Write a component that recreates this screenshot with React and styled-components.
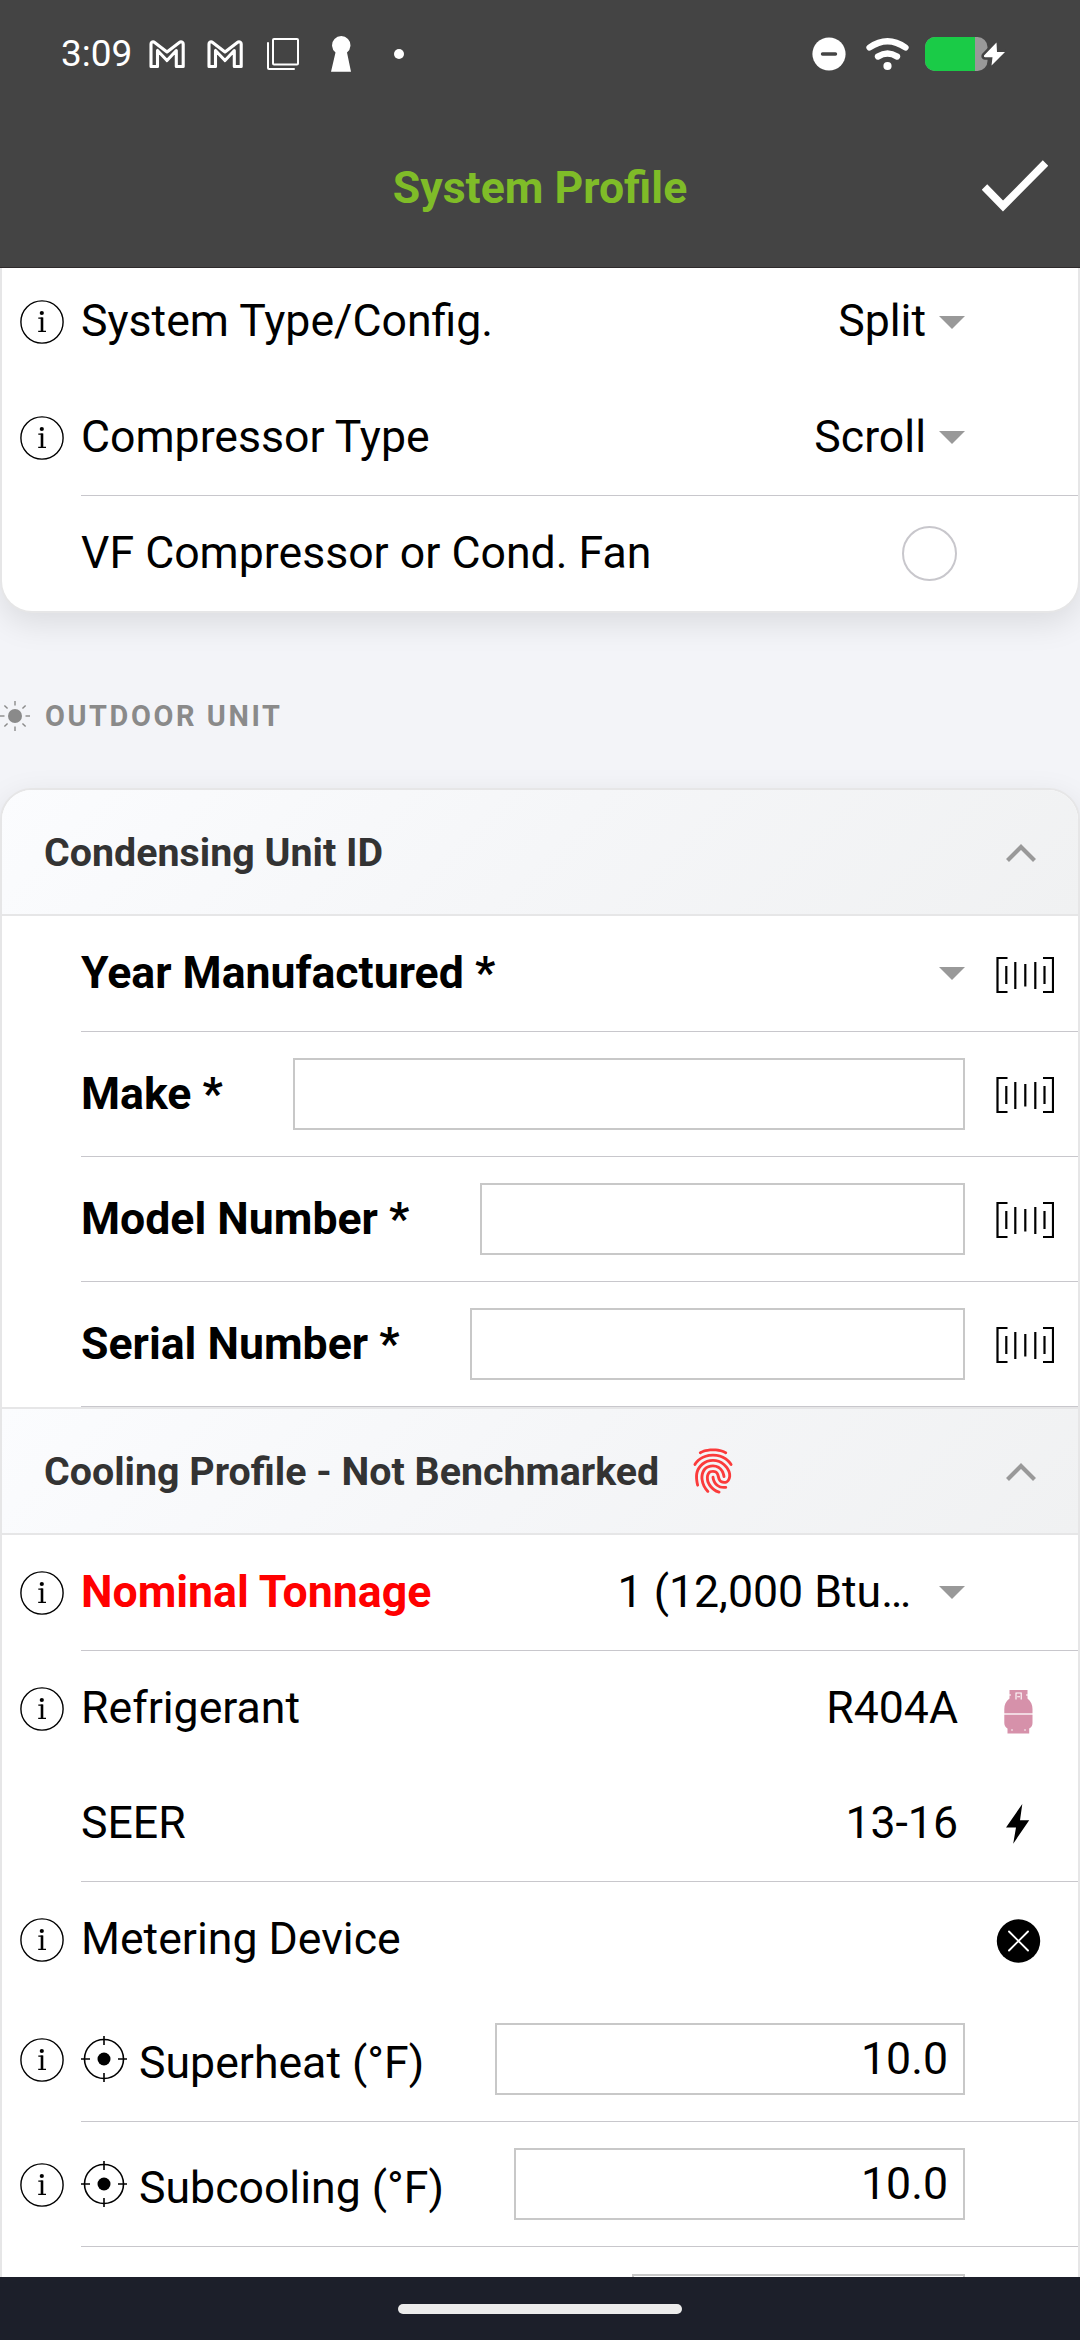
import React from "react";
import styled, { createGlobalStyle } from "styled-components";
import { IoFingerPrint } from "react-icons/io5";

const GlobalStyle = createGlobalStyle`
  * {
    box-sizing: border-box;
  }
  body {
    margin: 0;
    background: #f3f4f8;
    font-family: Roboto, "Liberation Sans", sans-serif;
  }
  svg {
    display: block;
    flex: none;
  }
`;

const Screen = styled.div`
  width: 1080px;
  height: 2340px;
  display: flex;
  flex-direction: column;
  overflow: hidden;
  color: #000;
  font-size: 44.625px;
`;

const Header = styled.header`
  height: 268px;
  flex: none;
  background: #444;
  border-bottom: 1px solid #2e2a2b;
`;

const StatusBar = styled.div`
  height: 108px;
  display: flex;
  align-items: center;
  justify-content: space-between;
  padding: 0 74px 0 61px;
`;

const StatusGroup = styled.div`
  display: flex;
  align-items: center;
`;

const Clock = styled.span`
  width: 88px;
  font-size: 37px;
  line-height: 40px;
  color: #fff;
`;

const Toolbar = styled.div`
  height: 159px;
  display: grid;
  grid-template-columns: 1fr auto 1fr;
  align-items: center;
  padding: 0 32px;
`;

const Title = styled.h1`
  grid-column: 2;
  margin: 0;
  font-size: 44.625px;
  font-weight: 700;
  line-height: 54px;
  color: #7fbc28;
`;

const DoneButton = styled.button`
  justify-self: end;
  padding: 0 0 3px;
  border: none;
  background: transparent;
`;

const Content = styled.main`
  flex: 1;
  min-height: 0;
  overflow: hidden;
`;

const Card = styled.section`
  border: 2px solid #e6e6e7;
  border-radius: 32px;
  background: #fff;
  box-shadow: 0 10px 32px rgba(0, 0, 0, 0.1);
  overflow: hidden;
`;

// the first card is scrolled partly under the header
const ScrolledCard = styled(Card)`
  margin-top: -4px;
  border-top: none;
  border-top-left-radius: 0;
  border-top-right-radius: 0;
`;

const SectionTitle = styled.h2`
  height: 175px;
  margin: 0;
  padding-top: 31px;
  display: flex;
  align-items: center;
  gap: 15px;
  font-size: 28.875px;
  font-weight: 700;
  letter-spacing: 2.6px;
  color: #8a8a8a;
`;

const GroupHeader = styled.div`
  height: ${(props) => (props.$divided ? 128 : 126)}px;
  display: flex;
  align-items: center;
  padding: 0 42px;
  border-top: ${(props) => (props.$divided ? "2px solid #e6e6e7" : "none")};
  border-bottom: 2px solid #e6e6e7;
  background: linear-gradient(135deg, #fbfcfe, #f5f6f8 50%, #f0f1f2);
  font-size: 39.375px;
  font-weight: 700;
  color: #333;
`;

const GroupName = styled.span`
  flex: 1;
  display: flex;
  align-items: center;
  gap: 30px;
  white-space: nowrap;
`;

const Row = styled.div`
  height: ${(props) => props.$height}px;
  display: flex;
`;

const InfoSlot = styled.div`
  width: 79px;
  flex: none;
  display: flex;
  align-items: center;
  padding-left: 18px;
`;

const RowBody = styled.div`
  flex: 1;
  min-width: 0;
  display: flex;
  align-items: center;
  justify-content: space-between;
  border-bottom: ${(props) => (props.$line ? "1px solid #c8c7cc" : "none")};
`;

const Label = styled.label`
  display: flex;
  align-items: center;
  gap: 12px;
  padding-bottom: ${(props) => (props.$raised ? 2 : 0)}px;
  white-space: nowrap;
  font-weight: ${(props) => (props.$strong ? 700 : 400)};
  color: ${(props) => props.$color || "#000"};
`;

const LabelText = styled.span`
  padding-top: ${(props) => (props.$lowered ? 8 : 0)}px;
`;

const Controls = styled.div`
  flex: none;
  display: flex;
  align-items: center;
`;

const Value = styled.span`
  padding: 0 7px 2px 0;
`;

const SelectValue = styled.span`
  padding: 0 ${(props) => props.$gap || 13}px 2px 0;
`;

const Caret = styled.span`
  border-left: 13px solid transparent;
  border-right: 13px solid transparent;
  border-top: 13px solid #999;
`;

const Field = styled.input`
  width: ${(props) => props.$width}px;
  height: 72px;
  padding: 0 15px;
  border: 2px solid #c8c8c8;
  border-radius: 0;
  background: #fff;
  color: #000;
  font: inherit;
  text-align: right;
  outline: none;
`;

const Radio = styled.span`
  width: 55px;
  height: 55px;
  margin-right: 8px;
  border: 2px solid #c8c7cc;
  border-radius: 50%;
`;

const Trailing = styled.div`
  width: 113px;
  height: 58px;
  display: flex;
  align-items: center;
  padding: 2px 0 0 31px;
`;

const NavBar = styled.footer`
  height: 63px;
  flex: none;
  display: flex;
  justify-content: center;
  padding-top: 27px;
  background: #1c1f2a;
`;

const NavPill = styled.div`
  width: 284px;
  height: 10px;
  border-radius: 5px;
  background: #ececec;
`;

const NotificationIcons = () => (
  <svg width="256" height="40" viewBox="149 35 256 40" fill="none">
    {[0, 58].map((x) => (
      <path
        key={x}
        transform={`translate(${x} 0)`}
        d="M151 67.500V45Q151 42.500 154 43L167 53L180 43Q183.200 42.500 183.200 45V67.500H176.300V51.500L167 61.500L157.500 51.500V67.500Z"
        stroke="#fff"
        strokeWidth="3.1"
        strokeLinejoin="round"
      />
    ))}
    <rect x="273" y="40" width="25" height="25.500" rx="1" stroke="#fff" strokeWidth="2" />
    <path d="M268 44V69Q268 70 269 70H294" stroke="#fff" strokeWidth="2" strokeLinecap="round" />
    <path d="M335.500 53.500A9.200 9.200 0 1 1 347 53.500L351 72.700H331Z" fill="#fff" />
    <circle cx="399" cy="55" r="5" fill="#fff" />
  </svg>
);

const SystemIcons = () => (
  <svg width="194" height="40" viewBox="812 34 194 40" fill="none">
    <circle cx="829" cy="54" r="16.600" fill="#fff" />
    <path d="M822.500 54H835.500" stroke="#444" strokeWidth="3.400" strokeLinecap="round" />
    <path
      d="M869.500 47.500Q887.500 35 905.500 47.500M878 56.500Q887.500 50.500 897 56.500"
      stroke="#fff"
      strokeWidth="6.300"
      strokeLinecap="round"
    />
    <circle cx="887.500" cy="66" r="4.100" fill="#fff" />
    <rect x="925" y="37" width="62.500" height="34" rx="10" fill="#999" />
    <path d="M975 37V71H935A10 10 0 0 1 925 61V47A10 10 0 0 1 935 37Z" fill="#1acb47" />
    <path
      d="M996.500 42.500L984 55.500Q983.500 57 985 57.200H992.500L991.500 65.500L1005 52H997Z"
      fill="#fff"
      stroke="#444"
      strokeWidth="5"
      strokeLinejoin="round"
      paintOrder="stroke"
    />
  </svg>
);

const CheckIcon = () => (
  <svg width="66" height="52" viewBox="0 0 66 52" fill="none">
    <path d="M2.500 27L21 46L63.500 3" stroke="#fff" strokeWidth="7.600" />
  </svg>
);

const InfoIcon = () => (
  <svg width="44" height="44" viewBox="-22 -22 44 44" fill="none" stroke="#000">
    <circle r="21.100" strokeWidth="1.400" />
    <circle cx="-0.200" cy="-9" r="2.100" fill="#000" stroke="none" />
    <path d="M-3.700 -3.900H0V9.300M-3.800 9.300H4" strokeWidth="1.300" />
    <path d="M0 -4.500V9.300" strokeWidth="2.600" />
  </svg>
);

const SunIcon = () => (
  <svg width="30" height="30" viewBox="-15 -15 30 30">
    <circle r="7" fill="#8a8a8a" />
    {[0, 45, 90, 135, 180, 225, 270, 315].map((angle) => (
      <path
        key={angle}
        d="M0 -10.500V-15"
        transform={`rotate(${angle})`}
        stroke="#8a8a8a"
        strokeWidth="1.400"
      />
    ))}
  </svg>
);

const ChevronUp = () => (
  <svg width="30" height="20" viewBox="0 -2 30 20" fill="none">
    <path d="M1.500 16.500L15 3L28.500 16.500" stroke="#999" strokeWidth="4.200" />
  </svg>
);

const BarcodeIcon = () => (
  <svg width="58" height="38" viewBox="0 0 58 38" fill="none" stroke="#000">
    <path d="M11.500 2H1.500V36H11.500M47 2H57V36H47" strokeWidth="2.200" />
    <path
      d="M10.300 10V28M19.300 6V33M29.300 8V30.500M39.300 6V33M48.500 10V28"
      strokeWidth="2.200"
    />
  </svg>
);

const TargetIcon = () => (
  <svg width="46" height="46" viewBox="-23 -23 46 46" fill="none" stroke="#000">
    <circle r="19.500" strokeWidth="1.600" />
    <circle r="6.500" fill="#000" stroke="none" />
    <path d="M0 -23V-14M0 23V14M-23 0H-14M23 0H14" strokeWidth="1.600" />
  </svg>
);

const TankIcon = () => (
  <svg width="45" height="48" viewBox="0 -4 45 48">
    <path
      d="M13.500 0H31.500V8.500C35 11 36.500 15 36.500 19V33C36.500 35.500 35.500 37.500 33.200 38.500V43.500H11.500V38.500C9.500 37.500 8.300 35.500 8.300 33V19C8.300 15 9.800 11 13.500 8.500Z"
      fill="#d691aa"
    />
    <path d="M8 24H37" stroke="#fff" strokeWidth="1.300" />
    <path
      d="M20 9.500V3H25.200V9.500M21.200 6.800H24M13 5H15M30 5H32"
      stroke="#fff"
      strokeWidth="1.100"
      fill="none"
    />
    <circle cx="16" cy="40" r="0.800" fill="#fff" />
    <circle cx="29" cy="40" r="0.800" fill="#fff" />
  </svg>
);

const FlashIcon = () => (
  <svg width="45" height="42" viewBox="0 0 45 42">
    <path d="M26.300 0L10 23.500H20L17.200 39.700L33.200 16.300H24Z" />
  </svg>
);

const CloseIcon = () => (
  <svg width="45" height="44" viewBox="0 0 45 44">
    <circle cx="22.500" cy="22" r="21.700" />
    <path
      d="M13 12.500L32 31.500M32 12.500L13 31.500"
      stroke="#fff"
      strokeWidth="1.900"
      strokeLinecap="round"
    />
  </svg>
);

const FormRow = ({
  label,
  height = 115,
  info,
  line,
  strong,
  color,
  target,
  icon,
  children,
}) => {
  return (
    <Row $height={height}>
      <InfoSlot>{info && <InfoIcon />}</InfoSlot>
      <RowBody $line={line}>
        <Label $strong={strong} $color={color} $raised={height < 125}>
          {target && <TargetIcon />}
          <LabelText $lowered={target}>{label}</LabelText>
        </Label>
        <Controls>
          {children}
          <Trailing>{icon}</Trailing>
        </Controls>
      </RowBody>
    </Row>
  );
};

const App = () => {
  return (
    <Screen>
      <GlobalStyle />
      <Header>
        <StatusBar>
          <StatusGroup>
            <Clock>3:09</Clock>
            <NotificationIcons />
          </StatusGroup>
          <SystemIcons />
        </StatusBar>
        <Toolbar>
          <Title>System Profile</Title>
          <DoneButton>
            <CheckIcon />
          </DoneButton>
        </Toolbar>
      </Header>

      <Content>
        <ScrolledCard>
          <FormRow label="System Type/Config." height={116} info>
            <SelectValue>Split</SelectValue>
            <Caret />
          </FormRow>
          <FormRow label="Compressor Type" height={116} info line>
            <SelectValue>Scroll</SelectValue>
            <Caret />
          </FormRow>
          <FormRow label="VF Compressor or Cond. Fan">
            <Radio />
          </FormRow>
        </ScrolledCard>

        <SectionTitle>
          <SunIcon />
          OUTDOOR UNIT
        </SectionTitle>

        <Card>
          <GroupHeader>
            <GroupName>Condensing Unit ID</GroupName>
            <ChevronUp />
          </GroupHeader>
          <FormRow label="Year Manufactured *" height={116} line strong icon={<BarcodeIcon />}>
            <Caret />
          </FormRow>
          <FormRow label="Make *" height={125} line strong icon={<BarcodeIcon />}>
            <Field $width={672} />
          </FormRow>
          <FormRow label="Model Number *" height={125} line strong icon={<BarcodeIcon />}>
            <Field $width={485} />
          </FormRow>
          <FormRow label="Serial Number *" height={125} line strong icon={<BarcodeIcon />}>
            <Field $width={495} />
          </FormRow>

          <GroupHeader $divided>
            <GroupName>
              Cooling Profile - Not Benchmarked
              <IoFingerPrint size={48} color="#fb3b3b" />
            </GroupName>
            <ChevronUp />
          </GroupHeader>
          <FormRow label="Nominal Tonnage" height={116} info line strong color="#f00">
            <SelectValue $gap={28}>1 (12,000 Btu…</SelectValue>
            <Caret />
          </FormRow>
          <FormRow label="Refrigerant" info icon={<TankIcon />}>
            <Value>R404A</Value>
          </FormRow>
          <FormRow label="SEER" height={116} line icon={<FlashIcon />}>
            <Value>13-16</Value>
          </FormRow>
          <FormRow label="Metering Device" info icon={<CloseIcon />} />
          <FormRow label="Superheat (°F)" height={125} info line target>
            <Field $width={470} defaultValue="10.0" />
          </FormRow>
          <FormRow label="Subcooling (°F)" height={125} info line target>
            <Field $width={451} defaultValue="10.0" />
          </FormRow>
          <FormRow height={125}>
            <Field $width={333} />
          </FormRow>
        </Card>
      </Content>

      <NavBar>
        <NavPill />
      </NavBar>
    </Screen>
  );
};

export default App;
